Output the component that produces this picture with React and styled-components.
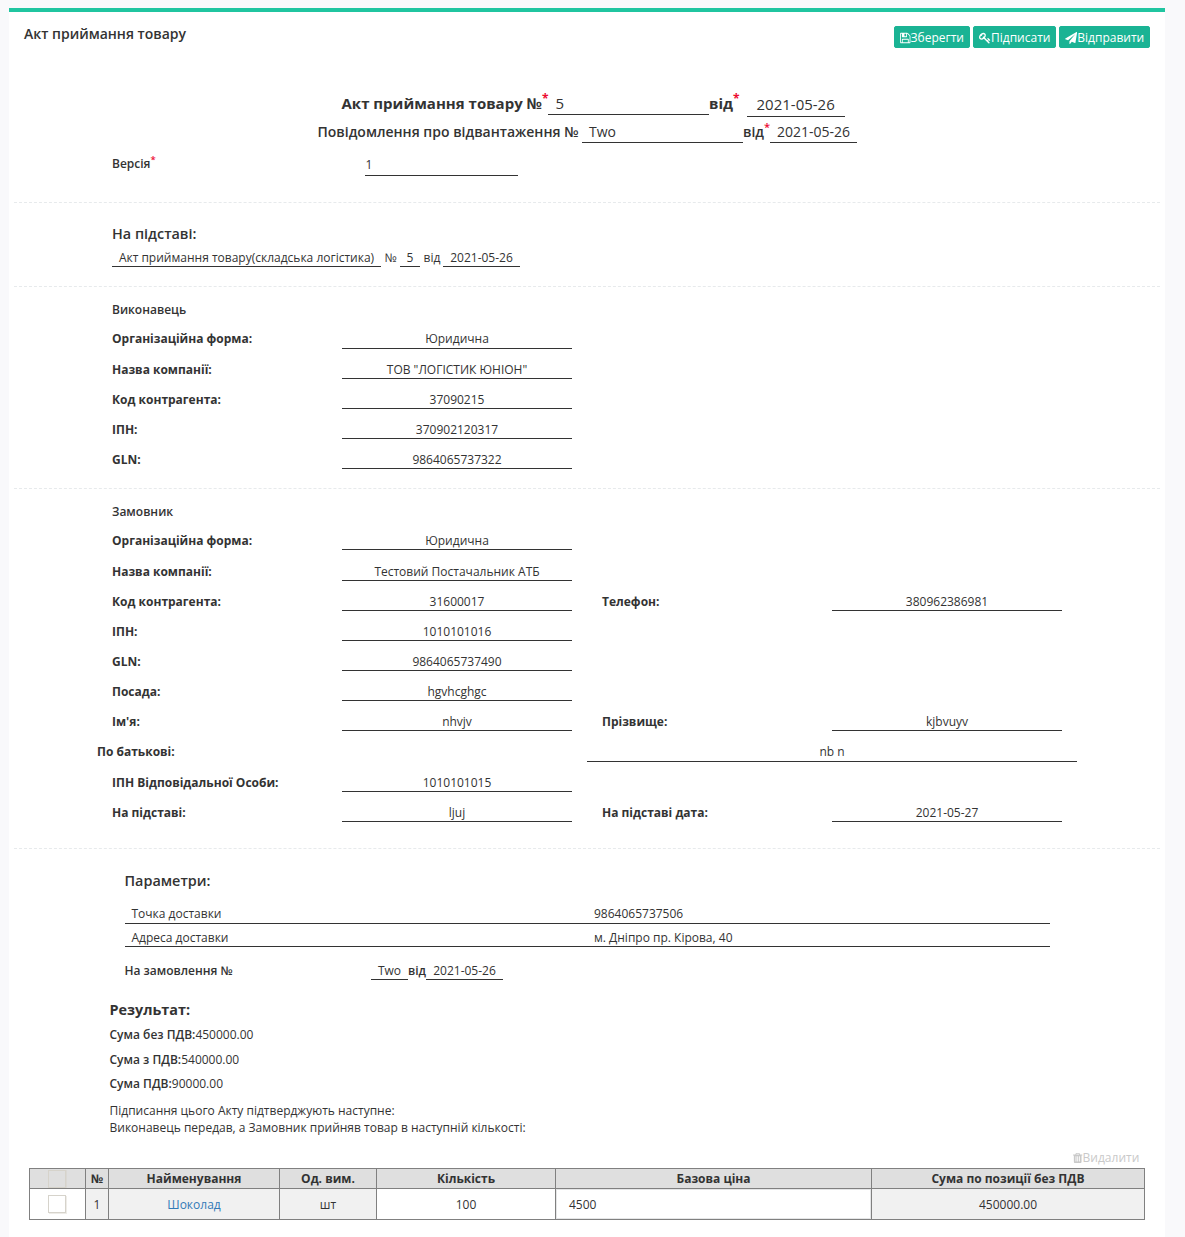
import React from "react";
import styled, { createGlobalStyle } from "styled-components";

const Global = createGlobalStyle`
  *, *::before, *::after { box-sizing: border-box; }
  html, body { margin: 0; padding: 0; }
  body {
    background: #f9f9fb;
    color: #333;
    font-family: "Open Sans", sans-serif;
    font-size: 12px;
    line-height: 17px;
    height: 1237px;
    overflow: hidden;
  }
`;

const Page = styled.main`
  height: 1237px;
  padding: 8px 20px 0 9px;
`;

const Panel = styled.div`
  height: 1229px;
  border-top: 4px solid #20c5a0;
  background: #fff;
`;

const Header = styled.header`
  display: flex;
  justify-content: space-between;
  height: 80px;
  padding: 12px 15px 0;
`;

const Title = styled.h1`
  margin: 0;
  font-size: 14px;
  font-weight: 600;
  line-height: 20px;
`;

const Toolbar = styled.div`
  display: flex;
  gap: 3px;
  padding-top: 2px;
`;

const Button = styled.button`
  display: flex;
  align-items: center;
  height: 22px;
  width: ${(p) => p.$width}px;
  padding: 2px 5px 0;
  border: 1px solid #1ab394;
  border-radius: 2px;
  background: #1ab394;
  color: #fff;
  font: 400 12px/18px "Open Sans", sans-serif;
  white-space: nowrap;
`;

const Glyph = styled.svg`
  display: block;
  flex: none;
  width: ${(p) => p.$width}px;
  height: 12px;
  fill: currentColor;
`;

const Section = styled.section`
  height: ${(p) => p.$height}px;
  margin: 0 4px 0 5px;
  padding: ${(p) => p.$top}px 0 0 98px;
`;

const Divider = styled.hr`
  height: 1px;
  margin: 0 5px;
  border: 0;
  border-top: 1px dashed #e7eaec;
`;

const DocLine = styled.div`
  display: flex;
  align-items: flex-start;
  height: ${(p) => p.$height}px;
  margin-left: ${(p) => p.$left || 0}px;
  font-size: ${(p) => p.$size}px;
  line-height: 21px;
  font-weight: ${(p) => p.$weight};
  white-space: nowrap;
`;

const DocLabel = styled.span`
  width: ${(p) => p.$width}px;
  flex: none;
  font-weight: ${(p) => p.$weight || "inherit"};
`;

const Star = styled.sup`
  color: #ed0b31;
  font-size: 80%;
  line-height: 0;
  vertical-align: baseline;
  position: relative;
  top: -0.5em;
`;

const DocValue = styled.span`
  flex: none;
  width: ${(p) => p.$width}px;
  height: ${(p) => p.$height}px;
  padding: ${(p) => p.$drop || 0}px 0 0 ${(p) => p.$pad}px;
  border-bottom: 1px solid #333;
  font-weight: 400;
`;

const Heading = styled.h2`
  height: ${(p) => p.$height}px;
  margin: 0 0 0 ${(p) => p.$left || 0}px;
  font-size: ${(p) => p.$size || 12}px;
  font-weight: 600;
  line-height: 20px;
`;

const ResultHeading = styled.h3`
  height: 26px;
  margin: 20px 0 0 -2.5px;
  font-size: 14.4px;
  font-weight: 700;
  line-height: 20px;
`;

const Inline = styled.div`
  display: flex;
  align-items: flex-start;
  white-space: nowrap;
`;

const Underlined = styled.span`
  height: 18px;
  width: ${(p) => p.$width}px;
  border-bottom: 1px solid #333;
  text-align: center;
`;

const Word = styled.span`
  width: ${(p) => p.$width}px;
  padding-left: ${(p) => p.$pad || 0}px;
  text-align: center;
  font-weight: ${(p) => p.$weight || 400};
`;

const Row = styled.div`
  display: grid;
  grid-template-columns: ${(p) =>
    p.$wide ? "490px 490px" : "230px 230px 230px 230px"};
  align-items: start;
  height: ${(p) => p.$height || 30}px;
  margin-left: ${(p) => (p.$wide ? -15 : 0)}px;

  & > :nth-child(n + 3) {
    margin-left: 30px;
  }
`;

const Label = styled.span`
  font-weight: 700;
  white-space: nowrap;
`;

const Value = styled.span`
  width: ${(p) => p.$width || 230}px;
  height: ${(p) => p.$height || 18}px;
  border-bottom: 1px solid #333;
  text-align: center;
`;

const ParamRow = styled.div`
  display: grid;
  grid-template-columns: 462.5px 462.5px;
  width: 925px;
  height: ${(p) => p.$height}px;
  margin-left: 13px;
  padding-top: ${(p) => p.$top}px;
  border-bottom: 1px solid #333;

  & > span {
    padding-left: 6.5px;
  }
`;

const OrderRow = styled(Inline)`
  margin: 15px 0 0 12.5px;
`;

const Total = styled.div`
  height: ${(p) => p.$height}px;
  margin-left: -2.5px;

  b {
    font-weight: 600;
  }
`;

const Note = styled.p`
  margin: 0 0 0 -2.5px;
`;

const DeleteBar = styled.div`
  display: flex;
  justify-content: flex-end;
  align-items: center;
  height: 17px;
  margin: 13px 21.7px 2px 0;
  color: #c9c9c9;
`;

const Grid = styled.div`
  display: grid;
  grid-template-columns: 55px 22px 170px 96px 178px 315px 272px;
  grid-template-rows: 19px 30px;
  gap: 1px;
  width: 1116px;
  margin-left: -83px;
  padding: 1px;
  background: #808080;
`;

const Cell = styled.div`
  display: flex;
  align-items: center;
  justify-content: center;
  min-width: 0;
  min-height: 0;
  background: ${(p) => (p.$head ? "#dfdfdf" : p.$white ? "#fff" : "#f1f1f1")};
  color: ${(p) => (p.$link ? "#337ab7" : "#333")};
  font-weight: ${(p) => (p.$head ? 700 : 400)};
`;

const PriceInput = styled.div`
  width: 100%;
  height: 100%;
  padding: 6px 12px;
  border: 1px solid #e5e6e7;
  background: #fff;
`;

const Check = styled.span`
  width: 18px;
  height: 18px;
  margin-right: 1px;
  border: 1px solid #d6d3cb;
  box-shadow: 1px 1px 0 #eeece8;
  background: #fff;
`;

const MutedCheck = styled(Check)`
  border-color: #d6d3cb;
  box-shadow: 1px 0 0 #dad8d4;
  background: transparent;
`;

const Floppy = () => (
  <Glyph $width={10.6} viewBox="128 0 1536 1792">
    <path d="M512 1536h768v-384h-768v384zm896 0h128v-896q0-14-10-38.5t-20-34.5l-281-281q-10-10-34-20t-39-10v416q0 40-28 68t-68 28h-576q-40 0-68-28t-28-68v-416h-128v1280h128v-416q0-40 28-68t68-28h832q40 0 68 28t28 68v416zm-384-928v-320q0-13-9.5-22.5t-22.5-9.5h-192q-13 0-22.5 9.5t-9.5 22.5v320q0 13 9.5 22.5t22.5 9.5h192q13 0 22.5-9.5t9.5-22.5zm640 32v928q0 40-28 68t-68 28h-1344q-40 0-68-28t-28-68v-1344q0-40 28-68t68-28h928q40 0 88 20t76 48l280 280q28 28 48 76t20 88z" />
  </Glyph>
);

const KeyIcon = () => (
  <Glyph $width={12} viewBox="0 0 1792 1792">
    <path d="M832 512q0-80-56-136t-136-56-136 56-56 136q0 42 19 83-41-19-83-19-80 0-136 56t-56 136 56 136 136 56 136-56 56-136q0-42-19-83 41 19 83 19 80 0 136-56t56-136zm851 704q0 17-49 66t-66 49q-9 0-28.5-16t-36.5-33-38.5-40-24.5-26l-96 96 220 220q28 28 28 68 0 42-39 81t-81 39q-40 0-68-28l-671-671q-176 131-365 131-163 0-265.5-102.5t-102.5-265.5q0-160 95-313t248-248 313-95q163 0 265.5 102.5t102.5 265.5q0 189-131 365l355 355 96-96q-3-3-26-24.5t-40-38.5-33-36.5-16-28.5q0-17 49-66t66-49q13 0 23 10 6 6 46 44.5t82 79.5 86.5 86 73 78 28.5 41z" />
  </Glyph>
);

const Plane = () => (
  <Glyph $width={12.3} viewBox="0 0 1792 1792">
    <path d="M1764 11q33 24 27 64l-256 1536q-5 29-32 45-14 8-31 8-11 0-24-5l-453-185-242 295q-18 23-49 23-13 0-22-4-19-7-30.5-23.5t-11.5-36.5v-349l864-1059-1069 925-395-162q-37-14-40-55-2-40 32-59l1664-960q15-9 32-9 20 0 36 11z" />
  </Glyph>
);

const Trash = () => (
  <Glyph $width={9.4} viewBox="192 0 1408 1792">
    <path d="M704 1376v-704q0-14-9-23t-23-9h-64q-14 0-23 9t-9 23v704q0 14 9 23t23 9h64q14 0 23-9t9-23zm256 0v-704q0-14-9-23t-23-9h-64q-14 0-23 9t-9 23v704q0 14 9 23t23 9h64q14 0 23-9t9-23zm256 0v-704q0-14-9-23t-23-9h-64q-14 0-23 9t-9 23v704q0 14 9 23t23 9h64q14 0 23-9t9-23zm-544-992h448l-48-117q-7-9-17-11h-317q-10 2-17 11zm928 32v64q0 14-9 23t-23 9h-96v948q0 83-47 143.5t-113 60.5h-832q-66 0-113-58.5t-47-141.5v-952h-96q-14 0-23-9t-9-23v-64q0-14 9-23t23-9h309l70-167q15-37 54-63t79-26h320q40 0 79 26t54 63l70 167h309q14 0 23 9t9 23z" />
  </Glyph>
);

const contractor = [
  { label: "Організаційна форма:", value: "Юридична", height: 31, box: 19 },
  { label: "Назва компанії:", value: 'ТОВ "ЛОГІСТИК ЮНІОН"' },
  { label: "Код контрагента:", value: "37090215" },
  { label: "ІПН:", value: "370902120317" },
  { label: "GLN:", value: "9864065737322" },
];

const customer = [
  { label: "Організаційна форма:", value: "Юридична", height: 31 },
  { label: "Назва компанії:", value: "Тестовий Постачальник АТБ" },
  { label: "Код контрагента:", value: "31600017", label2: "Телефон:", value2: "380962386981" },
  { label: "ІПН:", value: "1010101016" },
  { label: "GLN:", value: "9864065737490" },
  { label: "Посада:", value: "hgvhcghgc" },
  { label: "Ім'я:", value: "nhvjv", label2: "Прізвище:", value2: "kjbvuyv" },
  { label: "По батькові:", value: "nb n", wide: true, height: 31, box: 19 },
  { label: "ІПН Відповідальної Особи:", value: "1010101015" },
  { label: "На підставі:", value: "ljuj", label2: "На підставі дата:", value2: "2021-05-27" },
];

const Fields = ({ rows }) =>
  rows.map((r) => (
    <Row key={r.label} $wide={r.wide} $height={r.height}>
      <Label>{r.label}</Label>
      <Value $width={r.wide ? 490 : 230} $height={r.box}>{r.value}</Value>
      {r.label2 && <Label>{r.label2}</Label>}
      {r.value2 && <Value>{r.value2}</Value>}
    </Row>
  ));

const columns = ["№", "Найменування", "Од. вим.", "Кількість", "Базова ціна", "Сума по позиції без ПДВ"];

export default function App() {
  return (
    <Page>
      <Global />
      <Panel>
        <Header>
          <Title>Акт приймання товару</Title>
          <Toolbar>
            <Button $width={76}><Floppy />Зберегти</Button>
            <Button $width={83}><KeyIcon />Підписати</Button>
            <Button $width={91}><Plane />Відправити</Button>
          </Toolbar>
        </Header>

        <Section $height={110} $top={1}>
          <DocLine $size={15} $weight={700} $height={28} $left={229.5}>
            <DocLabel $width={206.5}>Акт приймання товару №<Star>*</Star></DocLabel>
            <DocValue $width={161} $height={22} $pad={7.5}>5</DocValue>
            <DocLabel $width={38}>від<Star>*</Star></DocLabel>
            <DocValue $width={98} $height={24} $pad={9.5} $drop={1}>2021-05-26</DocValue>
          </DocLine>
          <DocLine $size={14} $weight={600} $height={32} $left={205.5}>
            <DocLabel $width={264.5}>Повідомлення про відвантаження №</DocLabel>
            <DocValue $width={161} $height={22} $pad={7}>Two</DocValue>
            <DocLabel $width={27}>від<Star>*</Star></DocLabel>
            <DocValue $width={87} $height={22} $pad={7}>2021-05-26</DocValue>
          </DocLine>
          <DocLine $size={12} $weight={600} $height={24}>
            <DocLabel $width={253}>Версія<Star>*</Star></DocLabel>
            <DocValue $width={153} $height={23} $pad={0.5} $drop={1}>1</DocValue>
          </DocLine>
        </Section>
        <Divider />

        <Section $height={83} $top={21}>
          <Heading $size={14.4} $height={25}>На підставі:</Heading>
          <Inline>
            <Underlined $width={269}>Акт приймання товару(складська логістика)</Underlined>
            <Word $width={19}>№</Word>
            <Underlined $width={20}>5</Underlined>
            <Word $width={23} $pad={1}>від</Word>
            <Underlined $width={77}>2021-05-26</Underlined>
          </Inline>
        </Section>
        <Divider />

        <Section $height={201} $top={13}>
          <Heading $height={30}>Виконавець</Heading>
          <Fields rows={contractor} />
        </Section>
        <Divider />

        <Section $height={359} $top={13}>
          <Heading $height={30}>Замовник</Heading>
          <Fields rows={customer} />
        </Section>
        <Divider />

        <Section $height={388} $top={22}>
          <Heading $size={14.4} $height={34} $left={12.5}>Параметри:</Heading>
          <ParamRow $height={19} $top={0}>
            <span>Точка доставки</span>
            <span>9864065737506</span>
          </ParamRow>
          <ParamRow $height={23} $top={5}>
            <span>Адреса доставки</span>
            <span>м. Дніпро пр. Кірова, 40</span>
          </ParamRow>
          <OrderRow>
            <DocLabel $width={246.5} $weight={600}>На замовлення №</DocLabel>
            <Underlined $width={37}>Two</Underlined>
            <Word $width={18} $weight={600}>від</Word>
            <Underlined $width={77}>2021-05-26</Underlined>
          </OrderRow>
          <ResultHeading>Результат:</ResultHeading>
          <Total $height={25}><b>Сума без ПДВ:</b>450000.00</Total>
          <Total $height={24}><b>Сума з ПДВ:</b>540000.00</Total>
          <Total $height={27}><b>Сума ПДВ:</b>90000.00</Total>
          <Note>Підписання цього Акту підтверджують наступне:</Note>
          <Note>Виконавець передав, а Замовник прийняв товар в наступній кількості:</Note>
          <DeleteBar><Trash />Видалити</DeleteBar>
          <Grid>
            <Cell $head><MutedCheck /></Cell>
            {columns.map((c) => <Cell key={c} $head>{c}</Cell>)}
            <Cell $white><Check /></Cell>
            <Cell>1</Cell>
            <Cell $link>Шоколад</Cell>
            <Cell>шт</Cell>
            <Cell $white>100</Cell>
            <Cell $white><PriceInput>4500</PriceInput></Cell>
            <Cell>450000.00</Cell>
          </Grid>
        </Section>
      </Panel>
    </Page>
  );
}
